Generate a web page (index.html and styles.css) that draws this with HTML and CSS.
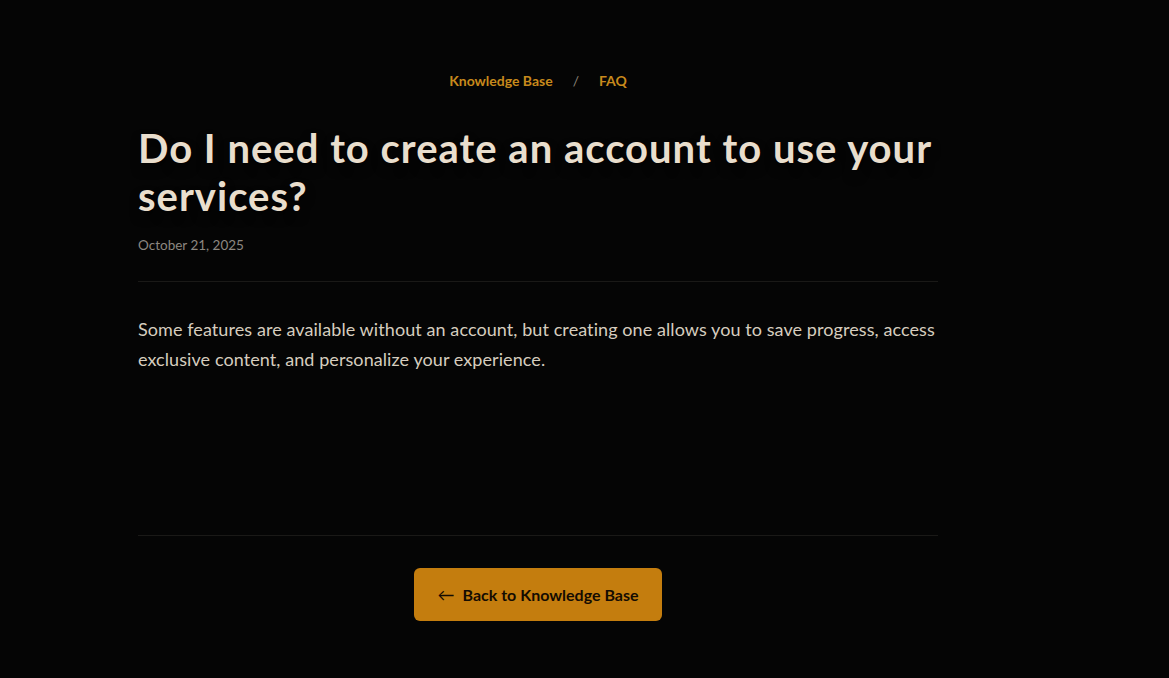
FILE: index.html
```html
<!DOCTYPE html>
<html lang="en">
<head>
<meta charset="utf-8">
<title>Do I need to create an account to use your services?</title>
<link rel="stylesheet" href="styles.css">
</head>
<body>
<main class="page">
  <article class="article">
    <nav class="crumbs">
      <a class="crumb" href="#">Knowledge Base</a>
      <span class="sep">/</span>
      <a class="crumb" href="#">FAQ</a>
    </nav>
    <h1 class="title">Do I need to create an account to use your services?</h1>
    <div class="date">October 21, 2025</div>
    <hr class="rule">
    <div class="content">
      <p class="body">Some features are available without an account, but creating one allows you to save progress, access exclusive content, and personalize your experience.</p>
    </div>
    <hr class="rule">
    <div class="actions">
      <a class="back" href="#"><span class="arrow">←</span> Back to Knowledge Base</a>
    </div>
  </article>
</main>
</body>
</html>
```

FILE: styles.css
```css
html, body {
  margin: 0;
  padding: 0;
  background: #050505;
}
body {
  font-family: "Lato", "Open Sans", sans-serif;
  color: #e6dccd;
  min-height: 678px;
}
.page {
  padding: 70px 0 40px 138px;
}
.article {
  width: 800px;
}
.crumbs {
  display: flex;
  justify-content: center;
  align-items: center;
  gap: 20px;
  height: 20px;
  font-size: 14px;
  font-weight: 700;
}
.crumb {
  color: #c88a1c;
  text-decoration: none;
}
.sep {
  color: #8a8478;
  font-weight: 400;
}
.title {
  margin: 34px 0 0;
  font-size: 40px;
  line-height: 48px;
  font-weight: 700;
  letter-spacing: 1px;
  color: #e9decd;
  text-shadow: 0 6px 10px rgba(0,0,0,0.6);
}
.date {
  margin-top: 15px;
  font-size: 13.5px;
  line-height: 20px;
  color: #8c8780;
}
.rule {
  margin: 26px 0 0;
  border: 0;
  border-top: 1px solid #1a1917;
  height: 0;
}
.content {
  padding-top: 32px;
  height: 221px;
  box-sizing: border-box;
}
.content + .rule {
  margin-top: 32px;
}
.body {
  margin: 0;
  font-size: 18px;
  line-height: 30px;
  letter-spacing: 0.08px;
  color: #d6cdbf;
}
.actions {
  display: flex;
  justify-content: center;
  padding-top: 32px;
}
.back {
  display: flex;
  align-items: center;
  gap: 8px;
  width: 248px;
  height: 53px;
  box-sizing: border-box;
  justify-content: center;
  background: #c47d0e;
  border-radius: 6px;
  color: #140c02;
  font-size: 16px;
  font-weight: 700;
  text-decoration: none;
}
.arrow {
  font-weight: 400;
  font-size: 17px;
}
```
